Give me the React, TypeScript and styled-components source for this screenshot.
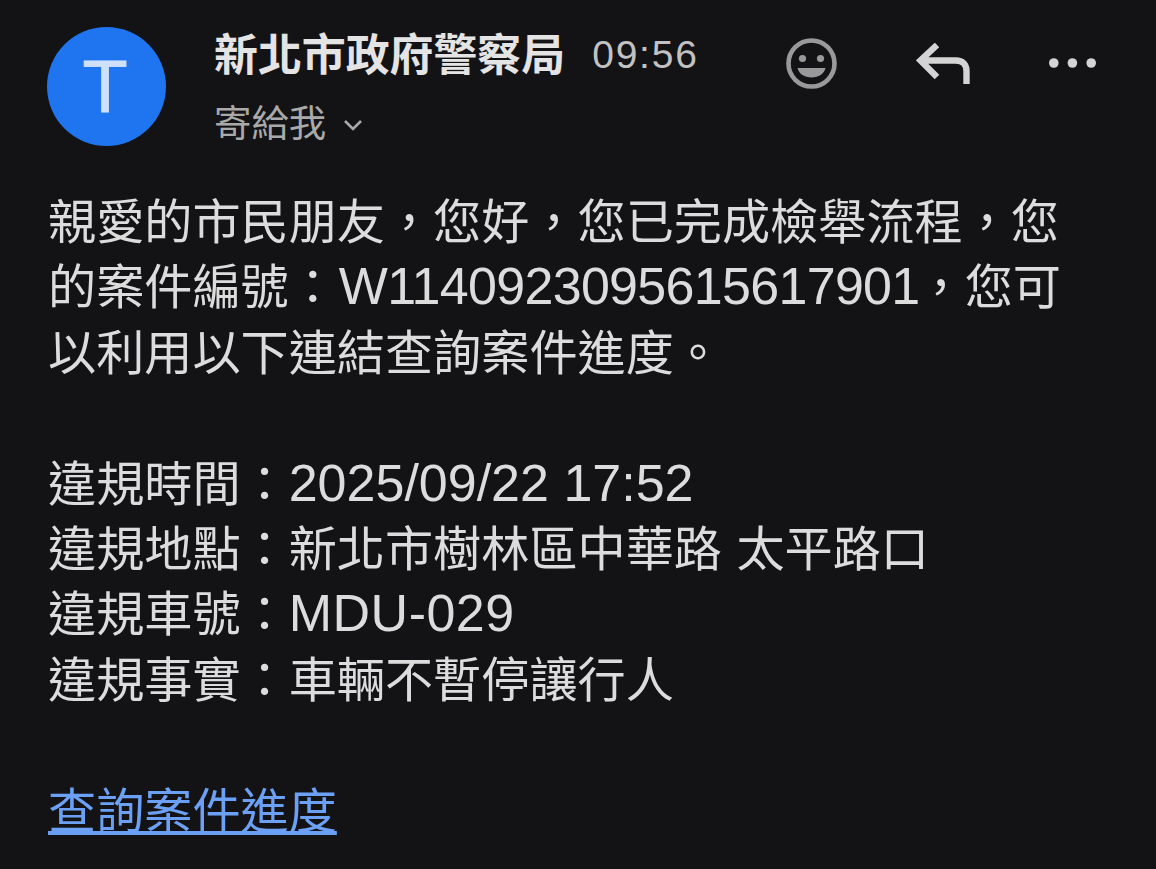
import React from 'react'
import styled, { createGlobalStyle } from 'styled-components'

const GlobalStyle = createGlobalStyle`
  html, body {
    margin: 0;
    padding: 0;
    height: 100%;
    background: #131316;
    overflow: hidden;
  }
`

const fontStack = `"Liberation Sans", "Noto Sans CJK TC", sans-serif`

const Page = styled.div`
  width: 1156px;
  height: 869px;
  background: #131316;
  font-family: ${fontStack};
  overflow: hidden;
`

const Header = styled.header`
  display: flex;
  align-items: flex-start;
  height: 146px;
  padding: 27px 0 0 47px;
  box-sizing: border-box;
`

const Avatar = styled.div`
  display: flex;
  align-items: center;
  justify-content: center;
  flex: none;
  width: 119px;
  height: 119px;
  padding-right: 3px;
  box-sizing: border-box;
  border-radius: 50%;
  background: #1f74ef;
  color: #cfe0fb;
  font-size: 74px;
  line-height: 1;
  -webkit-text-stroke: 0.8px #cfe0fb;
`

const SenderColumn = styled.div`
  display: flex;
  flex-direction: column;
  flex: none;
  margin-left: 48px;
  width: 572px;
`

const SenderRow = styled.div`
  display: flex;
  align-items: center;
  height: 56px;
`

const SenderName = styled.span`
  font-size: 43.9px;
  font-weight: 700;
  color: #e4e4e4;
  white-space: nowrap;
  margin-bottom: 7px;
`

const Time = styled.span`
  margin-left: 27px;
  font-size: 39px;
  letter-spacing: 1.8px;
  color: #c2c2c2;
`

const RecipientRow = styled.div`
  display: flex;
  align-items: center;
  margin-top: 13px;
  color: #a9a9a9;
  font-size: 37.4px;
  line-height: 56px;
`

const Chevron = styled.svg`
  width: 20px;
  height: 12px;
  margin-left: 17px;
  margin-top: 2px;
`

const Actions = styled.div`
  display: flex;
  align-items: center;
  gap: 79px;
  height: 72px;
`

const Body = styled.main`
  padding: 44px 0 0 48px;
  width: 1040px;
  font-size: 48.15px;
  line-height: 65.4px;
  color: #dcdcdc;
`

const Para = styled.p`
  margin: 0 0 65.4px;
`

const Latin = styled.span<{ $spacing?: number }>`
  font-size: 52px;
  line-height: 1;
  letter-spacing: ${(p) => p.$spacing ?? 0}px;
`

const CaseNumber = styled(Latin)`
  margin: 0 -3px 0 2px;
`

const CaseLink = styled.a`
  color: #6ca0f4;
  text-decoration: underline;
  text-decoration-skip-ink: none;
  text-underline-offset: 3px;
  text-decoration-thickness: 4px;
`

export default function App() {
  return (
    <Page>
      <GlobalStyle />
      <Header>
        <Avatar>T</Avatar>
        <SenderColumn>
          <SenderRow>
            <SenderName>新北市政府警察局</SenderName>
            <Time>09:56</Time>
          </SenderRow>
          <RecipientRow>
            寄給我
            <Chevron viewBox="0 0 20 12" fill="none">
              <path d="M2 2l8 8 8-8" stroke="#a9a9a9" strokeWidth="2.6" />
            </Chevron>
          </RecipientRow>
        </SenderColumn>
        <Actions>
          <svg width="51" height="51" viewBox="0 0 51 51">
            <circle cx="25.5" cy="25.5" r="23" fill="none" stroke="#999" strokeWidth="4.6" />
            <circle cx="16.5" cy="20.5" r="3.6" fill="#999" />
            <circle cx="34.5" cy="20.5" r="3.6" fill="#999" />
            <path d="M11.5 30h28c-1.5 6-7 9.5-14 9.5s-12.5-3.5-14-9.5z" fill="#999" />
          </svg>
          <svg width="54" height="41" viewBox="0 0 54 41">
            <path
              d="M21 2L4.500 17.500 21 34M4.500 17.500H40c6.500 0 10.500 4 10.500 10.500V41"
              fill="none"
              stroke="#d4d4d4"
              strokeWidth="6.400"
            />
          </svg>
          <svg width="47" height="10" viewBox="0 0 47 10">
            <circle cx="4.800" cy="5" r="4.800" fill="#d4d4d4" />
            <circle cx="23.400" cy="5" r="4.800" fill="#d4d4d4" />
            <circle cx="42.200" cy="5" r="4.800" fill="#d4d4d4" />
          </svg>
        </Actions>
      </Header>
      <Body>
        <Para>
          親愛的市民朋友，您好，您已完成檢舉流程，您
          <br />
          的案件編號：<CaseNumber $spacing={-0.7}>W1140923095615617901</CaseNumber>，您可
          <br />
          以利用以下連結查詢案件進度。
        </Para>
        <Para>
          違規時間：<Latin>2025/09/22 17:52</Latin>
          <br />
          違規地點：新北市樹林區中華路<Latin> </Latin>太平路口
          <br />
          違規車號：<Latin $spacing={0.5}>MDU-029</Latin>
          <br />
          違規事實：車輛不暫停讓行人
        </Para>
        <CaseLink href="#">查詢案件進度</CaseLink>
      </Body>
    </Page>
  )
}
